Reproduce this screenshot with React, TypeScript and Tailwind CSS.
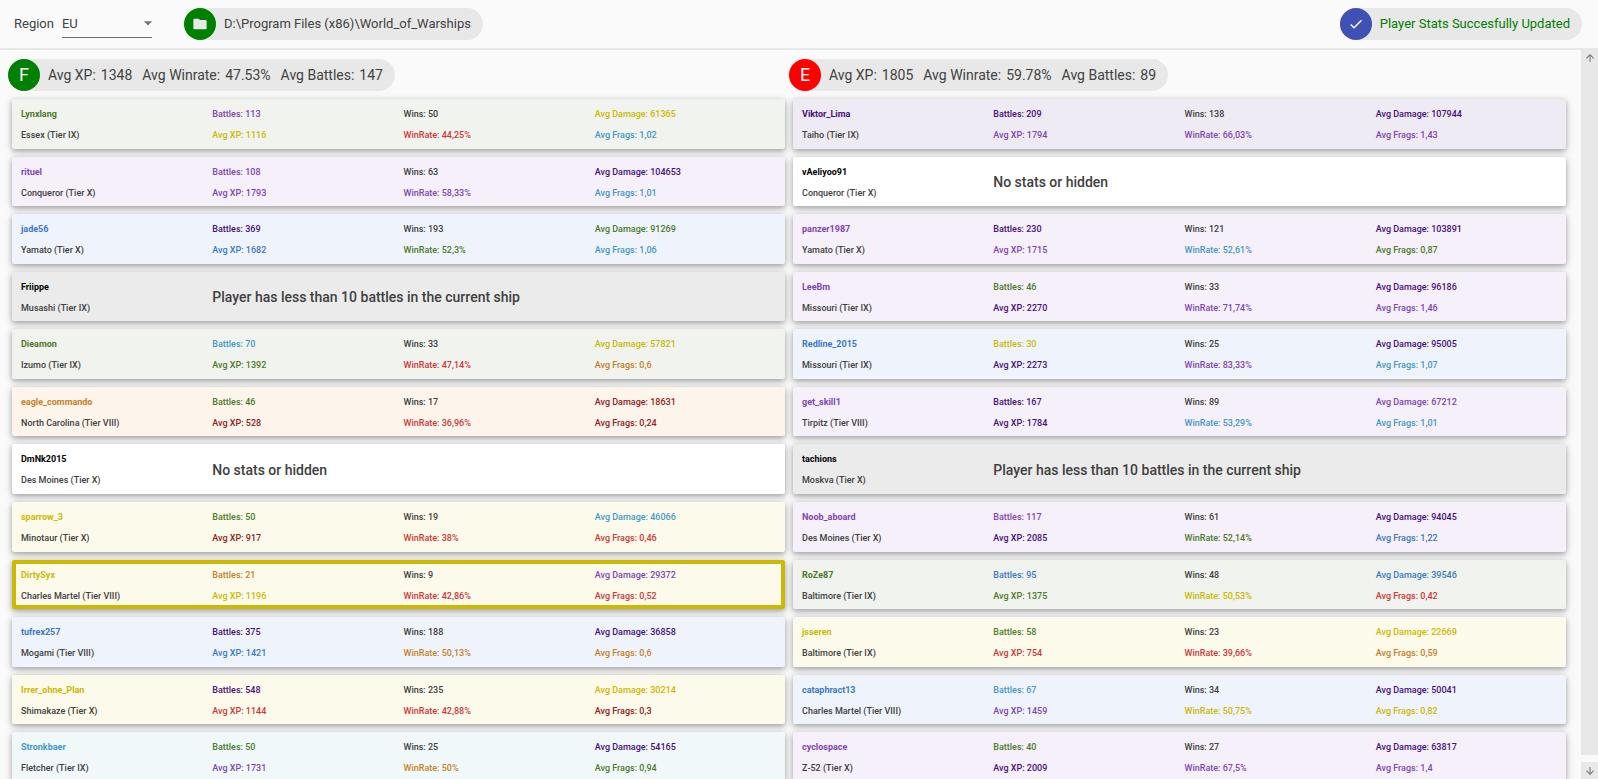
import { useState } from "react";
import { MdArrowDropDown, MdArrowUpward, MdArrowDownward, MdCheck, MdFolder } from "react-icons/md";
import { clsx } from "clsx";

type Rating =
  | "superUnicum"
  | "unicum"
  | "great"
  | "veryGood"
  | "good"
  | "average"
  | "belowAverage"
  | "bad"
  | "veryBad"
  | "none"
  | "few";

interface Stat {
  value: string;
  rating: Rating;
}

interface Player {
  name: string;
  ship: string;
  rating: Rating;
  self?: boolean;
  message?: string;
  battles?: Stat;
  xp?: Stat;
  wins?: string;
  winRate?: Stat;
  damage?: Stat;
  frags?: Stat;
}

const TEXT: Record<Rating, string> = {
  superUnicum: "text-[#460e80]",
  unicum: "text-[#8045b8]",
  great: "text-[#3a78c8]",
  veryGood: "text-[#4299c7]",
  good: "text-[#4d7a27]",
  average: "text-[#cdb900]",
  belowAverage: "text-[#c8801e]",
  bad: "text-[#d13638]",
  veryBad: "text-[#932020]",
  none: "text-black",
  few: "text-black",
};

const BACKGROUND: Record<Rating, string> = {
  superUnicum: "bg-[#efebf4]",
  unicum: "bg-[#f5f0fa]",
  great: "bg-[#eff4fc]",
  veryGood: "bg-[#f0f8fa]",
  good: "bg-[#f0f3ee]",
  average: "bg-[#fcfaeb]",
  belowAverage: "bg-[#fdf5ec]",
  bad: "bg-[#fdeeee]",
  veryBad: "bg-[#f8ecec]",
  none: "bg-white",
  few: "bg-[#ebebeb]",
};

const HIDDEN = "No stats or hidden";
const FEW_BATTLES = "Player has less than 10 battles in the current ship";

const s = (value: string, rating: Rating): Stat => ({ value, rating });

const FRIENDS: Player[] = [
  { name: "Lynxlang", ship: "Essex (Tier IX)", rating: "good", battles: s("113", "unicum"), xp: s("1116", "average"), wins: "50", winRate: s("44,25%", "bad"), damage: s("61365", "average"), frags: s("1,02", "veryGood") },
  { name: "rituel", ship: "Conqueror (Tier X)", rating: "unicum", battles: s("108", "unicum"), xp: s("1793", "unicum"), wins: "63", winRate: s("58,33%", "unicum"), damage: s("104653", "superUnicum"), frags: s("1,01", "veryGood") },
  { name: "jade56", ship: "Yamato (Tier X)", rating: "great", battles: s("369", "superUnicum"), xp: s("1682", "great"), wins: "193", winRate: s("52,3%", "good"), damage: s("91269", "good"), frags: s("1,06", "veryGood") },
  { name: "Friippe", ship: "Musashi (Tier IX)", rating: "few", message: FEW_BATTLES },
  { name: "Dieamon", ship: "Izumo (Tier IX)", rating: "good", battles: s("70", "veryGood"), xp: s("1392", "good"), wins: "33", winRate: s("47,14%", "bad"), damage: s("57821", "average"), frags: s("0,6", "belowAverage") },
  { name: "eagle_commando", ship: "North Carolina (Tier VIII)", rating: "belowAverage", battles: s("46", "good"), xp: s("528", "veryBad"), wins: "17", winRate: s("36,96%", "bad"), damage: s("18631", "veryBad"), frags: s("0,24", "veryBad") },
  { name: "DmNk2015", ship: "Des Moines (Tier X)", rating: "none", message: HIDDEN },
  { name: "sparrow_3", ship: "Minotaur (Tier X)", rating: "average", battles: s("50", "good"), xp: s("917", "veryBad"), wins: "19", winRate: s("38%", "bad"), damage: s("46066", "veryGood"), frags: s("0,46", "bad") },
  { name: "DirtySyx", ship: "Charles Martel (Tier VIII)", rating: "average", self: true, battles: s("21", "belowAverage"), xp: s("1196", "average"), wins: "9", winRate: s("42,86%", "bad"), damage: s("29372", "unicum"), frags: s("0,52", "bad") },
  { name: "tufrex257", ship: "Mogami (Tier VIII)", rating: "great", battles: s("375", "superUnicum"), xp: s("1421", "great"), wins: "188", winRate: s("50,13%", "belowAverage"), damage: s("36858", "superUnicum"), frags: s("0,6", "belowAverage") },
  { name: "Irrer_ohne_Plan", ship: "Shimakaze (Tier X)", rating: "average", battles: s("548", "superUnicum"), xp: s("1144", "bad"), wins: "235", winRate: s("42,88%", "bad"), damage: s("30214", "average"), frags: s("0,3", "veryBad") },
  { name: "Stronkbaer", ship: "Fletcher (Tier IX)", rating: "veryGood", battles: s("50", "good"), xp: s("1731", "unicum"), wins: "25", winRate: s("50%", "belowAverage"), damage: s("54165", "superUnicum"), frags: s("0,94", "good") },
];

const ENEMIES: Player[] = [
  { name: "Viktor_Lima", ship: "Taiho (Tier IX)", rating: "superUnicum", battles: s("209", "superUnicum"), xp: s("1794", "unicum"), wins: "138", winRate: s("66,03%", "unicum"), damage: s("107944", "superUnicum"), frags: s("1,43", "unicum") },
  { name: "vAeliyoo91", ship: "Conqueror (Tier X)", rating: "none", message: HIDDEN },
  { name: "panzer1987", ship: "Yamato (Tier X)", rating: "unicum", battles: s("230", "superUnicum"), xp: s("1715", "unicum"), wins: "121", winRate: s("52,61%", "veryGood"), damage: s("103891", "superUnicum"), frags: s("0,87", "good") },
  { name: "LeeBm", ship: "Missouri (Tier IX)", rating: "unicum", battles: s("46", "good"), xp: s("2270", "superUnicum"), wins: "33", winRate: s("71,74%", "unicum"), damage: s("96186", "superUnicum"), frags: s("1,46", "unicum") },
  { name: "Redline_2015", ship: "Missouri (Tier IX)", rating: "great", battles: s("30", "average"), xp: s("2273", "superUnicum"), wins: "25", winRate: s("83,33%", "unicum"), damage: s("95005", "superUnicum"), frags: s("1,07", "veryGood") },
  { name: "get_skill1", ship: "Tirpitz (Tier VIII)", rating: "unicum", battles: s("167", "superUnicum"), xp: s("1784", "superUnicum"), wins: "89", winRate: s("53,29%", "veryGood"), damage: s("67212", "unicum"), frags: s("1,01", "veryGood") },
  { name: "tachions", ship: "Moskva (Tier X)", rating: "few", message: FEW_BATTLES },
  { name: "Noob_aboard", ship: "Des Moines (Tier X)", rating: "unicum", battles: s("117", "unicum"), xp: s("2085", "superUnicum"), wins: "61", winRate: s("52,14%", "good"), damage: s("94045", "superUnicum"), frags: s("1,22", "great") },
  { name: "RoZe87", ship: "Baltimore (Tier IX)", rating: "good", battles: s("95", "great"), xp: s("1375", "good"), wins: "48", winRate: s("50,53%", "average"), damage: s("39546", "great"), frags: s("0,42", "bad") },
  { name: "jsseren", ship: "Baltimore (Tier IX)", rating: "average", battles: s("58", "good"), xp: s("754", "bad"), wins: "23", winRate: s("39,66%", "bad"), damage: s("22669", "average"), frags: s("0,59", "belowAverage") },
  { name: "cataphract13", ship: "Charles Martel (Tier VIII)", rating: "great", battles: s("67", "veryGood"), xp: s("1459", "unicum"), wins: "34", winRate: s("50,75%", "average"), damage: s("50041", "superUnicum"), frags: s("0,82", "average") },
  { name: "cyclospace", ship: "Z-52 (Tier X)", rating: "unicum", battles: s("40", "good"), xp: s("2009", "superUnicum"), wins: "27", winRate: s("67,5%", "unicum"), damage: s("63817", "superUnicum"), frags: s("1,4", "unicum") },
];

function StatLine({ label, stat }: { label: string; stat?: Stat }) {
  if (!stat) return null;
  return (
    <p className={TEXT[stat.rating]}>
      {label}: {stat.value}
    </p>
  );
}

function PlayerCard({ player }: { player: Player }) {
  return (
    <li
      className={clsx(
        "grid grid-cols-4 rounded-xs px-1 pt-[5px] text-[9px] leading-[21px] font-medium text-[#404040]",
        "shadow-[0_2px_5px_0_rgba(0,0,0,0.26),0_2px_10px_0_rgba(0,0,0,0.16)]",
        BACKGROUND[player.rating],
        player.self && "outline-4 -outline-offset-4 outline-[#cdb900]"
      )}
    >
      <div className="pl-[5px]">
        <p className={clsx("font-bold", TEXT[player.rating])}>{player.name}</p>
        <p>{player.ship}</p>
      </div>
      {player.message ? (
        <p className="col-span-3 self-center pb-1 pl-[5px] text-sm">{player.message}</p>
      ) : (
        <>
          <div className="pl-[5px]">
            <StatLine label="Battles" stat={player.battles} />
            <StatLine label="Avg XP" stat={player.xp} />
          </div>
          <div className="pl-[5px]">
            <p>Wins: {player.wins}</p>
            <StatLine label="WinRate" stat={player.winRate} />
          </div>
          <div className="pl-[5px]">
            <StatLine label="Avg Damage" stat={player.damage} />
            <StatLine label="Avg Frags" stat={player.frags} />
          </div>
        </>
      )}
    </li>
  );
}

function Average({ label, value }: { label: string; value: string | number }) {
  return (
    <span className="flex gap-[5px]">
      <span>{label}:</span>
      <span>{value}</span>
    </span>
  );
}

interface TeamProps {
  letter: string;
  badge: string;
  xp: number;
  winRate: string;
  battles: number;
  players: Player[];
}

function Team({ letter, badge, xp, winRate, battles, players }: TeamProps) {
  return (
    <section className="min-w-0 flex-1">
      <div className="-ml-1 inline-flex h-8 items-center rounded-full bg-[#e8e8e8] pr-3 text-sm">
        <span className={clsx("mr-2 flex size-8 items-center justify-center rounded-full text-lg text-white", badge)}>
          {letter}
        </span>
        <span className="flex gap-2.5">
          <Average label="Avg XP" value={xp} />
          <Average label="Avg Winrate" value={winRate} />
          <Average label="Avg Battles" value={battles} />
        </span>
      </div>
      {/* rows share the list height evenly */}
      <ul className="mt-2 grid min-h-[683px] auto-rows-fr gap-2">
        {players.map((p) => (
          <PlayerCard key={p.name} player={p} />
        ))}
      </ul>
    </section>
  );
}

export default function App() {
  const [region, setRegion] = useState("EU");

  return (
    <div className="flex h-screen flex-col overflow-hidden bg-[#fafafa] font-[Roboto,sans-serif] text-[13px] text-[#424242]">
      <header className="flex h-[50px] shrink-0 items-center border-b-2 border-[#e8e8e8] pr-4 pl-3.5">
        <label htmlFor="region">Region</label>
        <div className="relative ml-2 w-[90px] border-b border-[#6e6e6e]">
          <select
            id="region"
            value={region}
            onChange={(e) => setRegion(e.target.value)}
            className="h-[26px] w-full appearance-none bg-transparent outline-none"
          >
            <option>EU</option>
            <option>NA</option>
            <option>RU</option>
            <option>ASIA</option>
          </select>
          <MdArrowDropDown className="pointer-events-none absolute top-0.5 -right-1.5 size-5 text-[#757575]" />
        </div>

        <button className="ml-8 flex h-8 items-center rounded-full bg-[#e8e8e8] pr-3">
          <span className="mr-2 flex size-8 items-center justify-center rounded-full bg-[#008000] text-[#e8e8e8]">
            <MdFolder className="size-4" />
          </span>
          D:\Program Files (x86)\World_of_Warships
        </button>

        <div className="ml-auto flex h-8 items-center rounded-full bg-[#e8e8e8] pr-3 text-[#008000]">
          <span className="mr-2 flex size-8 items-center justify-center rounded-full bg-[#3f51b5] text-white">
            <MdCheck className="size-4" />
          </span>
          Player Stats Succesfully Updated
        </div>
      </header>

      <div className="flex min-h-0 flex-1">
        <main className="flex min-w-0 flex-1 items-start gap-2 pt-[9px] pr-[15px] pl-3">
          <Team letter="F" badge="bg-[#008000]" xp={1348} winRate="47.53%" battles={147} players={FRIENDS} />
          <Team letter="E" badge="bg-[#ff0000]" xp={1805} winRate="59.78%" battles={89} players={ENEMIES} />
        </main>

        {/* Scrollbar */}
        <div className="flex w-[17px] shrink-0 flex-col gap-[7px] text-[#757575]">
          <button aria-label="Scroll up" className="flex flex-1 items-start justify-center bg-[#e8e8e8] pt-0.5">
            <MdArrowUpward className="size-3" />
          </button>
          <button aria-label="Scroll down" className="flex h-[17px] items-center justify-center bg-[#e8e8e8]">
            <MdArrowDownward className="size-3" />
          </button>
        </div>
      </div>
    </div>
  );
}
